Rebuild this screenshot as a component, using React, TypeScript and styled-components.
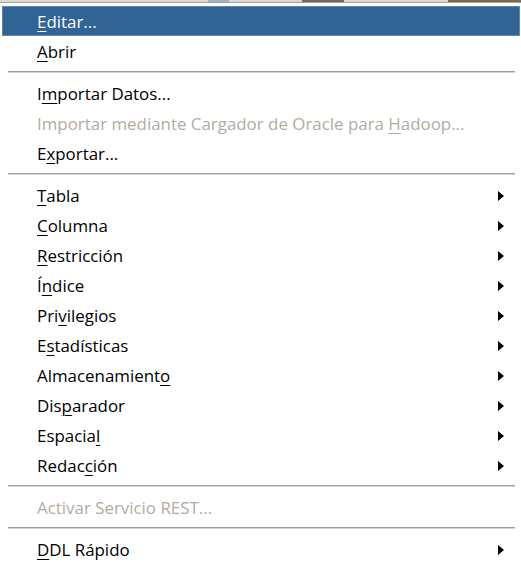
import React from "react";
import styled, { createGlobalStyle } from "styled-components";

const Global = createGlobalStyle`
  html, body { margin: 0; padding: 0; background: #ffffff; }
  body { width: 521px; height: 565px; overflow: hidden; }
`;

const Backdrop = styled.div`
  height: 2px;
  background: linear-gradient(90deg, #d9d9d9 0 40%, #9fb3c8 40% 44%, #d9d9d9 44% 58%, #6a6a6a 58% 66%, #d9d9d9 66% 86%, #7a6a55 86% 100%);
`;

const Menu = styled.div`
  width: 518px;
  background: #ffffff;
  border-top: 1px solid #a0a0a0;
  border-right: 1px solid #979797;
  box-shadow: 1px 0 0 #d0d0d0;
  padding: 3px 1px 2px 2px;
  font-family: "Open Sans", "Noto Sans", sans-serif;
  font-size: 16.9px;
`;

const Row = styled.div<{ $active?: boolean; $disabled?: boolean }>`
  height: 30px;
  display: flex;
  align-items: center;
  padding-left: 35px;
  padding-right: 16px;
  box-sizing: border-box;
  background: ${(p) => (p.$active ? "#316395" : "transparent")};
  box-shadow: ${(p) => (p.$active ? "inset 0 0 0 1px #5a86b2" : "none")};
  color: ${(p) => (p.$active ? "#ffffff" : p.$disabled ? "#b3ab9f" : "#000000")};
`;

const Label = styled.span`
  flex: 1;
  white-space: nowrap;
  & u {
    text-decoration: underline;
    text-underline-offset: 3px;
    text-decoration-thickness: 1px;
  }
`;

const Arrow = styled.span`
  width: 0;
  height: 0;
  margin-top: 2px;
  border-top: 5px solid transparent;
  border-bottom: 5px solid transparent;
  border-left: 6px solid #000000;
`;

const Separator = styled.div`
  height: 12px;
  display: flex;
  align-items: flex-start;
  padding: 5px 5px 0 6px;
  box-sizing: border-box;
  &::after {
    content: "";
    flex: 1;
    height: 1px;
    border-top: 1px solid #a0a0a0;
    background: #d4d4d4;
  }
`;

type Item =
  | { sep: true }
  | {
      sep?: false;
      pre: string;
      key?: string;
      post?: string;
      active?: boolean;
      disabled?: boolean;
      sub?: boolean;
    };

const items: Item[] = [
  { pre: "", key: "E", post: "ditar...", active: true },
  { pre: "", key: "A", post: "brir" },
  { sep: true },
  { pre: "I", key: "m", post: "portar Datos..." },
  { pre: "Importar mediante Cargador de Oracle para ", key: "H", post: "adoop...", disabled: true },
  { pre: "E", key: "x", post: "portar..." },
  { sep: true },
  { pre: "", key: "T", post: "abla", sub: true },
  { pre: "", key: "C", post: "olumna", sub: true },
  { pre: "", key: "R", post: "estricción", sub: true },
  { pre: "Í", key: "n", post: "dice", sub: true },
  { pre: "Pri", key: "v", post: "ilegios", sub: true },
  { pre: "E", key: "s", post: "tadísticas", sub: true },
  { pre: "Almacenamient", key: "o", post: "", sub: true },
  { pre: "Dis", key: "p", post: "arador", sub: true },
  { pre: "Espacia", key: "l", post: "", sub: true },
  { pre: "Redac", key: "c", post: "ión", sub: true },
  { sep: true },
  { pre: "Activar Servicio REST...", disabled: true },
  { sep: true },
  { pre: "", key: "D", post: "DL Rápido", sub: true },
];

export default function App() {
  return (
    <>
      <Global />
      <Backdrop />
      <Menu>
        {items.map((it, i) =>
          it.sep ? (
            <Separator key={i} />
          ) : (
            <Row key={i} $active={it.active} $disabled={it.disabled}>
              <Label>
                {it.pre}
                {it.key && <u>{it.key}</u>}
                {it.post}
              </Label>
              {it.sub && <Arrow />}
            </Row>
          )
        )}
      </Menu>
    </>
  );
}
